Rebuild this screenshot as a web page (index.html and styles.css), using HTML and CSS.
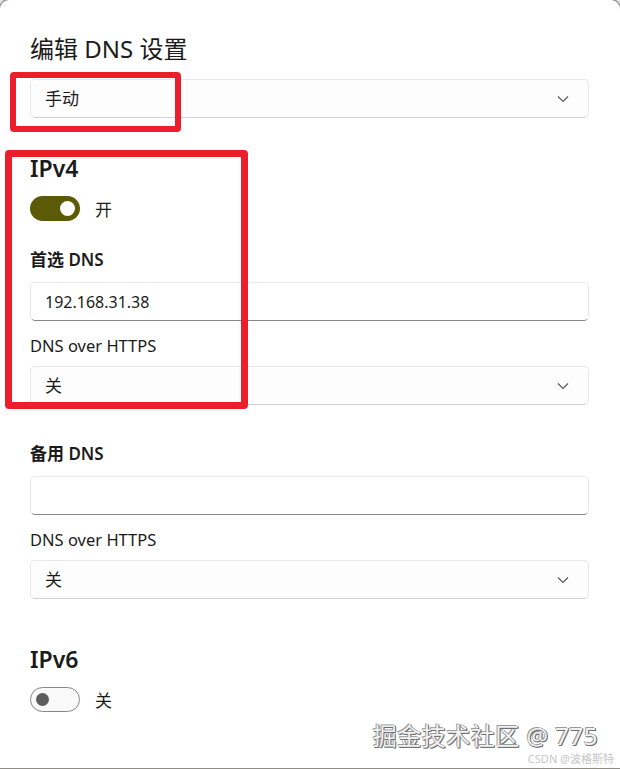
FILE: index.html
```html
<!DOCTYPE html>
<html lang="zh-CN">
<head>
<meta charset="utf-8">
<title>编辑 DNS 设置</title>
<link rel="stylesheet" href="styles.css">
</head>
<body>
<div class="panel">
  <h1 class="title">编辑 DNS 设置</h1>
  <div class="select first">
    <span class="value cjk">手动</span>
    <svg class="chev" width="12" height="8" viewBox="0 0 12 8"><path d="M1 1.5 L6 6.5 L11 1.5" fill="none" stroke="#5a5a5a" stroke-width="1.2"/></svg>
  </div>

  <h2 class="section ipv4">IPv4</h2>
  <div class="toggle-row">
    <span class="toggle on"><span class="knob"></span></span>
    <span class="toggle-label">开</span>
  </div>

  <div class="label strong l1">首选 DNS</div>
  <div class="input"><span class="value">192.168.31.38</span></div>
  <div class="label l2">DNS over HTTPS</div>
  <div class="select s2">
    <span class="value cjk">关</span>
    <svg class="chev" width="12" height="8" viewBox="0 0 12 8"><path d="M1 1.5 L6 6.5 L11 1.5" fill="none" stroke="#5a5a5a" stroke-width="1.2"/></svg>
  </div>

  <div class="label strong l3">备用 DNS</div>
  <div class="input"></div>
  <div class="label l2">DNS over HTTPS</div>
  <div class="select s2">
    <span class="value cjk">关</span>
    <svg class="chev" width="12" height="8" viewBox="0 0 12 8"><path d="M1 1.5 L6 6.5 L11 1.5" fill="none" stroke="#5a5a5a" stroke-width="1.2"/></svg>
  </div>

  <h2 class="section ipv6">IPv6</h2>
  <div class="toggle-row">
    <span class="toggle off"><span class="knob"></span></span>
    <span class="toggle-label">关</span>
  </div>

  <div class="mark mark1"></div>
  <div class="mark mark2"></div>

  <div class="watermark">
    <div class="wm-main">掘金技术社区 @ 775</div>
    <div class="wm-sub">CSDN @波格斯特</div>
  </div>
</div>
</body>
</html>
```

FILE: styles.css
```css
html, body {
  margin: 0;
  padding: 0;
}
body {
  background: #e2e2e2;
  width: 620px;
  height: 769px;
  overflow: hidden;
  font-family: "Noto Sans", "Noto Sans CJK SC", sans-serif;
  color: #1b1b1b;
}
.panel {
  position: relative;
  background: #ffffff;
  height: 768px;
  box-sizing: border-box;
  padding: 33px 31px 0 30px;
  border-radius: 9px 9px 0 0;
  box-shadow: 0 0 0 1px #8d8d82;
  display: flex;
  flex-direction: column;
}
.title {
  margin: 0;
  font-size: 24px;
  line-height: 32px;
  font-weight: 400;
  font-family: "Noto Sans", "Noto Sans CJK SC", sans-serif;
}
.select, .input {
  height: 39px;
  flex: 0 0 39px;
  box-sizing: border-box;
  border: 1px solid #e8e8e8;
  border-bottom-color: #d2d2d2;
  border-radius: 5px;
  background: #fdfdfd;
  display: flex;
  align-items: center;
  padding: 0 0 0 14px;
  font-size: 16px;
}
.select {
  justify-content: space-between;
  padding-right: 19px;
}
.select.first {
  margin-top: 14px;
}
.input {
  margin-top: 10px;
  border-bottom: 1px solid #868686;
  background: #ffffff;
}
.value {
  line-height: 20px;
}
.value.cjk {
  font-size: 17px;
}
.section {
  margin: 35px 0 0 0;
  font-size: 23px;
  line-height: 30px;
  font-weight: 600;
}
.section.ipv6 {
  margin-top: 45px;
}
.toggle-row {
  margin-top: 13px;
  display: flex;
  align-items: center;
  height: 25px;
  flex: 0 0 25px;
}
.toggle {
  position: relative;
  width: 50px;
  height: 25px;
  box-sizing: border-box;
  border-radius: 13px;
  display: flex;
  align-items: center;
}
.toggle.on {
  background: #5c5a07;
  justify-content: flex-end;
  padding-right: 5px;
}
.toggle.on .knob {
  width: 15px;
  height: 15px;
  border-radius: 50%;
  background: #ffffff;
}
.toggle.off {
  border: 1px solid #878787;
  background: #f9f9f9;
  padding-left: 5px;
}
.toggle.off .knob {
  width: 13px;
  height: 13px;
  border-radius: 50%;
  background: #5d5d5d;
}
.toggle-label {
  margin-left: 15px;
  font-size: 17px;
}
.label {
  font-size: 16.5px;
  line-height: 24px;
}
.label.strong {
  font-weight: 600;
  font-size: 17px;
}
.l1 {
  margin-top: 27px;
}
.l2 {
  margin-top: 13px;
}
.select.s2 {
  margin-top: 8px;
}
.l3 {
  margin-top: 37px;
}
.mark {
  position: absolute;
  border: 6px solid #ea1f2b;
  border-radius: 4px;
  box-sizing: border-box;
}
.mark1 {
  left: 10px;
  top: 72px;
  width: 171px;
  height: 60px;
}
.mark2 {
  left: 5px;
  top: 150px;
  width: 243px;
  height: 259px;
  border-width: 7px;
}
.watermark {
  position: absolute;
  right: 6px;
  bottom: 3px;
  display: flex;
  flex-direction: column;
  align-items: flex-end;
}
.wm-main {
  font-size: 24px;
  line-height: 28px;
  color: #f2f2f2;
  margin-right: 16px;
  text-shadow: 1px 1px 0 #6e6e6e, -1px -1px 0 #9a9a9a, 1px 0 0 #777, 0 1px 0 #777;
  letter-spacing: 0.5px;
}
.wm-sub {
  margin-top: 2px;
  font-size: 11px;
  line-height: 13px;
  color: #c6c6c6;
}
```
